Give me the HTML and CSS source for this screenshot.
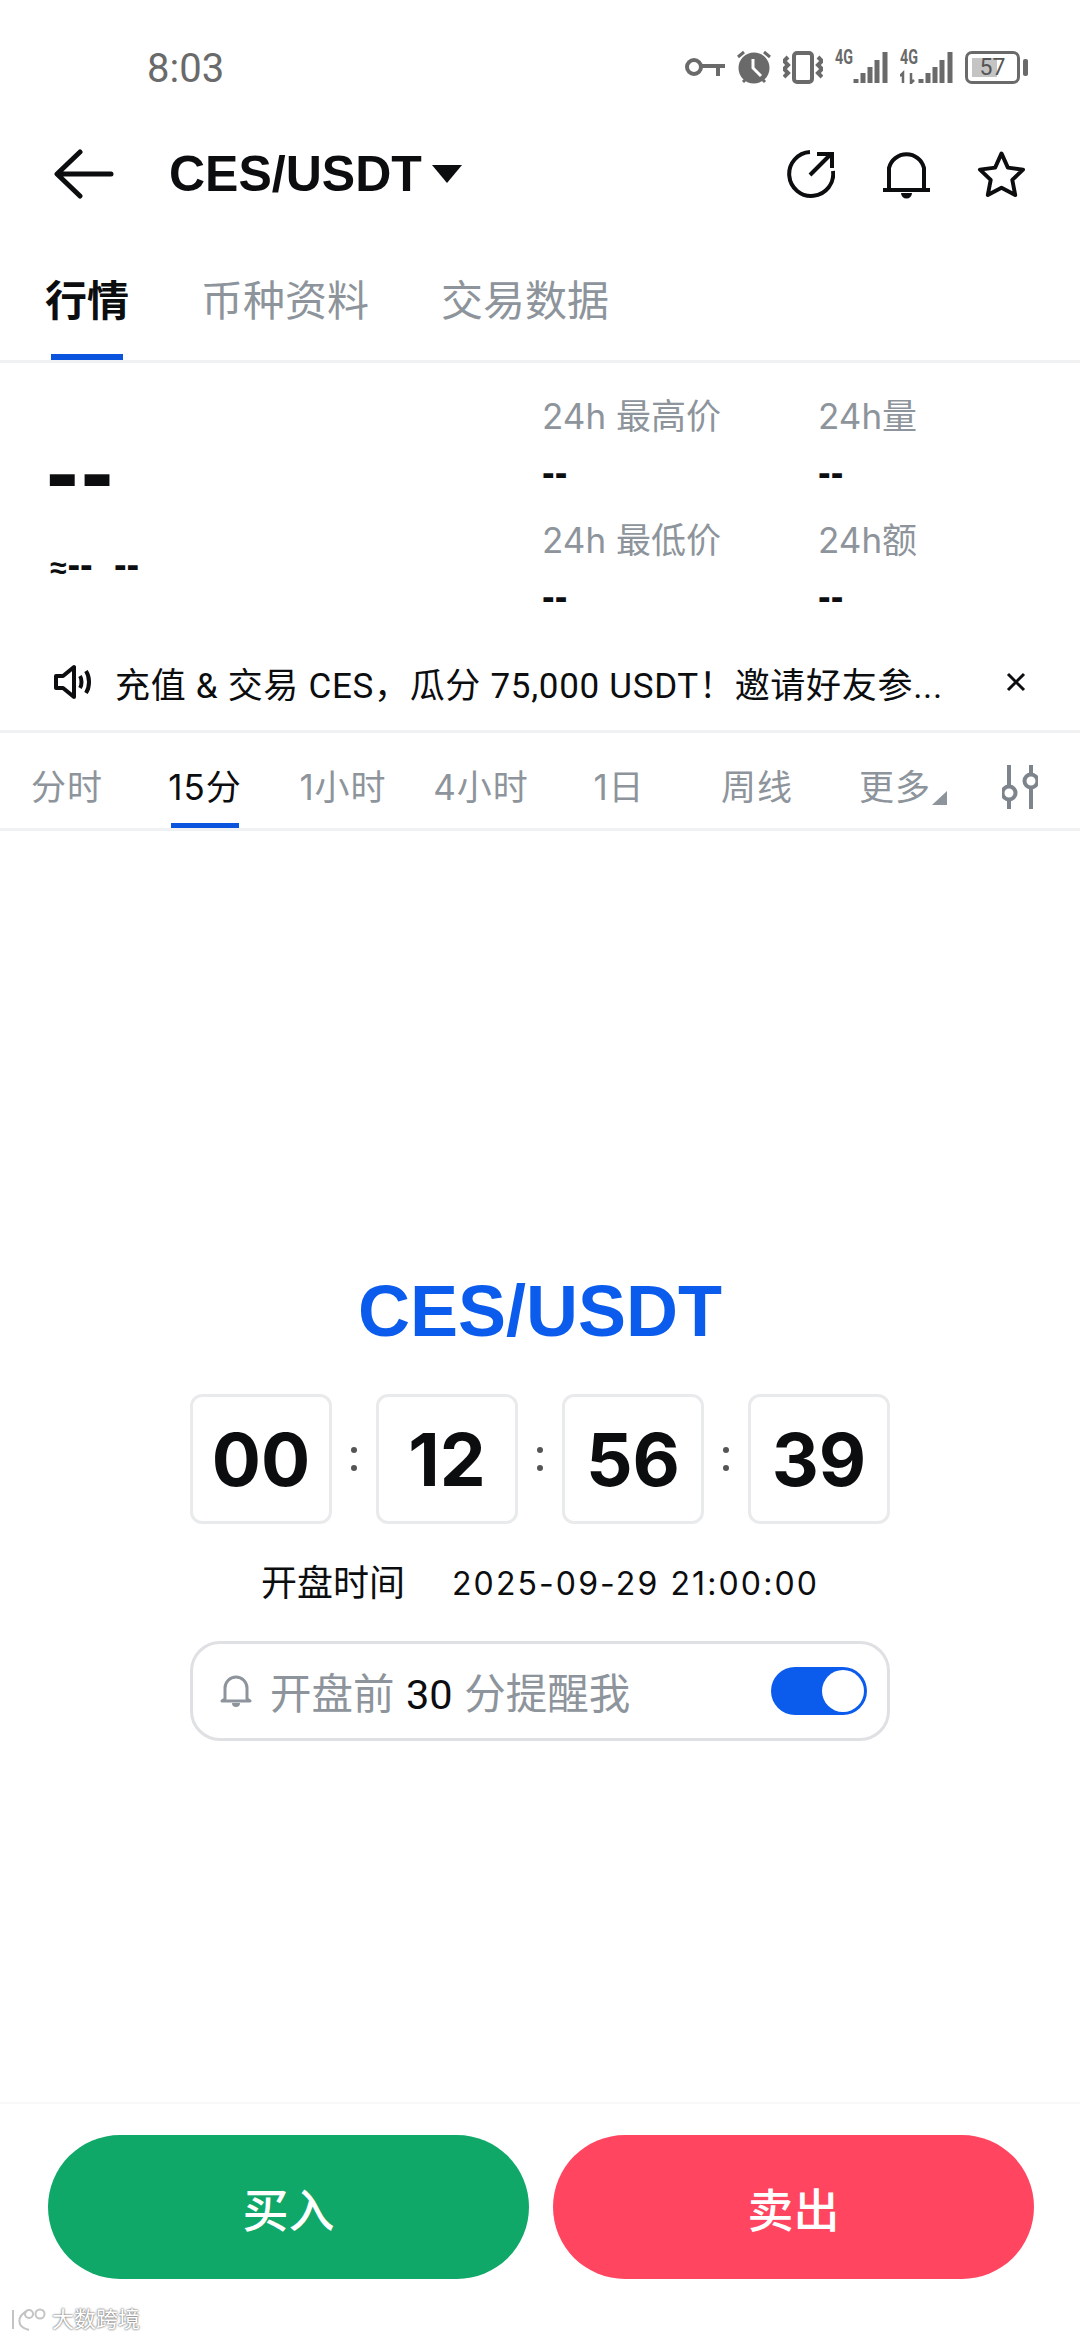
FILE: index.html
```html
<html>
    <head>
        <title>CES/USDT</title>
        <link rel="stylesheet" href="styles.css">
    </head>
    <body>
        <div class="page">
            <div class="status-bar">
                <span class="time">8:03</span>
                <div class="status-icons">
                    <svg class="ic-key" viewBox="0 0 40 18"><circle cx="9" cy="9" r="7" /><path d="M16 8H40M33 8V18" /></svg>
                    <svg class="ic-alarm" viewBox="0 0 34 34">
                        <circle class="solid" cx="17" cy="18" r="14" />
                        <path d="M1 7L7 2M33 7L27 2M6 32L9 29M28 32L25 29" />
                        <path class="cut" d="M16 9V18L24 26" />
                    </svg>
                    <svg class="ic-vibrate" viewBox="0 0 40 33">
                        <rect x="11" y="2" width="18" height="29" rx="3" />
                        <path d="M5 6L1 10L5 14L1 18L5 22L1 26M35 6L39 10L35 14L39 18L35 22L39 26" />
                    </svg>
                    <svg class="ic-signal" viewBox="0 -5 53 40">
                        <text class="net" x="0" y="15" textLength="18" lengthAdjust="spacingAndGlyphs">4G</text>
                        <path d="M21 30V34M28 24V34M35 18V34M42 11V34M50 3V34" />
                    </svg>
                    <svg class="ic-signal" viewBox="0 -5 53 40">
                        <text class="net" x="0" y="15" textLength="18" lengthAdjust="spacingAndGlyphs">4G</text>
                        <path class="thin" d="M3 34V24L0 27M11 24V34L14 31" />
                        <path d="M21 30V34M28 24V34M35 18V34M42 11V34M50 3V34" />
                    </svg>
                    <div class="battery">
                        <div class="battery-body">
                            <span class="battery-level"></span>
                            <span class="battery-text">57</span>
                        </div>
                        <span class="battery-nub"></span>
                    </div>
                </div>
            </div>

            <div class="header">
                <svg class="ic-back" viewBox="0 0 60 50"><path d="M57 25H4M26 3L3 25L26 47" /></svg>
                <span class="pair">CES/USDT</span>
                <span class="pair-caret"></span>
                <div class="header-actions">
                    <svg class="ic-share" viewBox="0 0 48 48"><path d="M23 2A22 22 0 1 0 46 21M23 25L44 4M30 4H45V18" /></svg>
                    <svg class="ic-bell" viewBox="0 0 48 50">
                        <path d="M6 41V19A18 18 0 0 1 41 19V41M0 41H47" />
                        <path class="fill" d="M18 44H29A5.500 5.500 0 0 1 18 44Z" />
                    </svg>
                    <svg class="ic-star" viewBox="0 0 50 48"><path d="M25 3L31.500 17.500L47 19.500L36 30L39 45.500L25 38L11 45.500L14 30L3 19.500L18.500 17.500Z" /></svg>
                </div>
            </div>

            <div class="tabs">
                <div class="tab active">行情<span class="tab-bar"></span></div>
                <div class="tab">币种资料</div>
                <div class="tab">交易数据</div>
            </div>

            <div class="stats">
                <div class="price-box">
                    <div class="price">--</div>
                    <div class="price-sub"><span class="approx">≈</span>--&nbsp;&nbsp;--</div>
                </div>
                <div class="stat-grid">
                    <div class="stat"><div class="stat-label">24h 最高价</div><div class="stat-value">--</div></div>
                    <div class="stat"><div class="stat-label">24h量</div><div class="stat-value">--</div></div>
                    <div class="stat"><div class="stat-label">24h 最低价</div><div class="stat-value">--</div></div>
                    <div class="stat"><div class="stat-label">24h额</div><div class="stat-value">--</div></div>
                </div>
            </div>

            <div class="notice">
                <svg class="ic-speaker" viewBox="0 0 40 36">
                    <path d="M2 12H9L20 3V33L9 24H2Z" />
                    <path d="M26 12C28 15 28 21 26 24M32 7C36 13 36 23 32 29" />
                </svg>
                <span class="notice-text">充值 &amp; 交易 CES，瓜分 75,000 USDT！邀请好友参...</span>
                <svg class="ic-close" viewBox="0 0 20 20"><path d="M2 2L18 18M18 2L2 18" /></svg>
            </div>

            <div class="frames">
                <div class="frame-list">
                    <div class="frame">分时</div>
                    <div class="frame active">15分<span class="frame-bar"></span></div>
                    <div class="frame">1小时</div>
                    <div class="frame">4小时</div>
                    <div class="frame">1日</div>
                    <div class="frame">周线</div>
                    <div class="frame">更多<span class="more-caret"></span></div>
                </div>
                <svg class="ic-sliders" viewBox="0 0 36 44">
                    <path d="M7 0V20M7 36V44M29 0V8M29 24V44" />
                    <circle cx="7" cy="28" r="6.500" />
                    <circle cx="29" cy="16" r="6.500" />
                </svg>
            </div>

            <div class="launch">
                <div class="launch-title">CES/USDT</div>
                <div class="countdown">
                    <div class="count-box">00</div>
                    <div class="count-sep"><i></i><i></i></div>
                    <div class="count-box">12</div>
                    <div class="count-sep"><i></i><i></i></div>
                    <div class="count-box">56</div>
                    <div class="count-sep"><i></i><i></i></div>
                    <div class="count-box">39</div>
                </div>
                <div class="open-time"><span>开盘时间</span><span class="open-date">2025-09-29 21:00:00</span></div>
                <div class="reminder">
                    <svg class="ic-bell-small" viewBox="0 0 32 34">
                        <path d="M5 25V14A11 11 0 0 1 27 14V25L30 27H2Z" />
                        <path class="fill" d="M12 29H20A4 4 0 0 1 12 29Z" />
                    </svg>
                    <span class="reminder-text">开盘前 <b>30</b> 分提醒我</span>
                    <div class="toggle"><span class="toggle-knob"></span></div>
                </div>
            </div>

            <div class="actions">
                <div class="btn buy">买入</div>
                <div class="btn sell">卖出</div>
            </div>

            <div class="watermark">
                <svg class="ic-mark" viewBox="0 0 38 24">
                    <path d="M3 2V21M17 3C7 8 6 19 19 22" />
                    <circle cx="19" cy="6" r="4" />
                    <circle cx="30" cy="6" r="4.500" />
                </svg>
                <span>大数跨境</span>
            </div>
        </div>
    </body>
</html>
```

FILE: styles.css
```css
* {
    box-sizing: border-box;
}
body {
    margin: 0;
    background: #fff;
    color: #0c0d0f;
    font-family: "Liberation Sans", "Noto Sans CJK SC", sans-serif;
}
svg {
    display: block;
    flex: none;
    fill: none;
    stroke: currentColor;
}
.page {
    position: relative;
    width: 1080px;
    height: 2340px;
    display: flex;
    flex-direction: column;
    overflow: hidden;
}

/* status bar */
.status-bar {
    height: 108px;
    padding: 26px 52px 0 147px;
    display: flex;
    align-items: center;
    justify-content: space-between;
    color: #6a6a6a;
}
.time {
    margin-top: 2px;
    font-family: Roboto, sans-serif;
    font-size: 40px;
}
.status-icons {
    display: flex;
    align-items: center;
    gap: 12px;
}
.status-icons svg {
    stroke-width: 5;
}
.ic-key {
    width: 40px;
    height: 18px;
}
.ic-key, .ic-vibrate {
    stroke-width: 4 !important;
}
.ic-alarm {
    width: 34px;
    height: 34px;
    stroke-width: 3 !important;
}
.ic-alarm .solid {
    fill: currentColor;
}
.ic-alarm .cut {
    stroke: #fff;
}
.ic-vibrate {
    width: 40px;
    height: 33px;
}
.ic-signal {
    width: 53px;
    height: 40px;
    margin-top: -7px;
}
.ic-signal .net {
    font-family: Roboto, sans-serif;
    font-size: 20px;
    font-weight: bold;
    fill: currentColor;
    stroke: none;
}
.ic-signal .thin {
    stroke-width: 2.500;
}
.battery {
    display: flex;
    align-items: center;
    gap: 3px;
}
.battery-body {
    position: relative;
    width: 55px;
    height: 33px;
    border: 3px solid #6a6a6a;
    border-radius: 7px;
    display: flex;
    align-items: center;
    justify-content: center;
    font-family: Roboto, sans-serif;
    font-size: 23px;
    color: #555;
}
.battery-level {
    position: absolute;
    left: 4px;
    top: 4px;
    bottom: 4px;
    width: 25px;
    background: #c4c4c4;
}
.battery-text {
    position: relative;
}
.battery-nub {
    width: 5px;
    height: 17px;
    background: #6a6a6a;
    border-radius: 2px;
}

/* header */
.header {
    height: 132px;
    padding: 0 54px;
    display: flex;
    align-items: center;
}
.ic-back {
    width: 60px;
    height: 50px;
    stroke-width: 5;
    stroke-linecap: round;
    stroke-linejoin: round;
}
.pair {
    margin-left: 55px;
    font-size: 50px;
    font-weight: bold;
}
.pair-caret {
    margin-left: 10px;
    border-left: 15px solid transparent;
    border-right: 15px solid transparent;
    border-top: 18px solid #0c0d0f;
}
.header-actions {
    margin-left: auto;
    display: flex;
    align-items: center;
    gap: 46px;
}
.ic-share {
    width: 48px;
    height: 48px;
    margin-right: 2px;
    stroke-width: 4;
}
.ic-bell {
    width: 48px;
    height: 50px;
    stroke-width: 4;
}
.ic-bell .fill, .ic-bell-small .fill {
    fill: currentColor;
    stroke: none;
}
.ic-star {
    width: 49px;
    height: 48px;
    stroke-width: 4;
    stroke-linejoin: round;
}

/* main tabs */
.tabs {
    height: 123px;
    padding: 0 45px;
    display: flex;
    gap: 72px;
    border-bottom: 3px solid #f0f1f2;
}
.tab {
    position: relative;
    padding-top: 37px;
    font-size: 42px;
    line-height: 50px;
    color: #8d949b;
}
.tab.active {
    color: #0c0d0f;
    font-weight: bold;
}
.tab-bar {
    position: absolute;
    left: 6px;
    right: 6px;
    bottom: 0;
    height: 6px;
    background: #0b55de;
}

/* price and 24h stats */
.stats {
    height: 275px;
    padding: 28px 0 0 50px;
    display: flex;
}
.price-box {
    width: 492px;
}
.price {
    margin: 43px 0 0 -4px;
    height: 76px;
    font-size: 98px;
    line-height: 76px;
    font-weight: bold;
    letter-spacing: 2px;
}
.price-sub {
    margin-top: 35px;
    font-size: 38px;
    line-height: 40px;
    font-weight: bold;
}
.approx {
    font-size: 30px;
    margin-right: 1px;
}
.stat-grid {
    display: grid;
    grid-template-columns: 276px 200px;
    row-gap: 16px;
    align-content: start;
}
.stat-label {
    font-family: Inter, "Noto Sans CJK SC", sans-serif;
    font-size: 35px;
    line-height: 50px;
    color: #8d949b;
}
.stat-value {
    margin-top: 7px;
    height: 51px;
    font-size: 38px;
    line-height: 50px;
    font-weight: bold;
}

/* notice line */
.notice {
    height: 95px;
    padding: 0 54px 4px;
    display: flex;
    align-items: center;
    border-bottom: 3px solid #f0f1f2;
}
.ic-speaker {
    width: 40px;
    height: 36px;
    stroke-width: 4;
    stroke-linejoin: round;
}
.notice-text {
    margin-left: 21px;
    font-family: Roboto, "Noto Sans CJK SC", sans-serif;
    font-size: 35px;
    letter-spacing: 0.7px;
    white-space: nowrap;
}
.ic-close {
    width: 20px;
    height: 20px;
    margin-left: auto;
    stroke-width: 3;
}

/* timeframes */
.frames {
    height: 98px;
    padding-right: 42px;
    display: flex;
    align-items: center;
    justify-content: space-between;
    border-bottom: 3px solid #f0f1f2;
}
.frame-list {
    height: 100%;
    display: grid;
    grid-template-columns: repeat(7, 134px);
    column-gap: 4px;
}
.frame {
    position: relative;
    display: flex;
    align-items: center;
    justify-content: center;
    padding-top: 8px;
    font-family: Inter, "Noto Sans CJK SC", sans-serif;
    font-size: 35px;
    letter-spacing: 1px;
    color: #8d949b;
}
.frame.active {
    color: #0c0d0f;
}
.frame-bar {
    position: absolute;
    left: 33px;
    bottom: 0;
    width: 68px;
    height: 5px;
    background: #0b55de;
}
.more-caret {
    position: absolute;
    right: 15px;
    top: 58px;
    border-left: 15px solid transparent;
    border-bottom: 14px solid #8d949b;
}
.ic-sliders {
    width: 36px;
    height: 44px;
    margin-top: 12px;
    color: #7d848b;
    stroke-width: 4;
}

/* pre-launch block */
.launch {
    flex: 1;
    padding-top: 435px;
    display: flex;
    flex-direction: column;
    align-items: center;
}
.launch-title {
    font-size: 72px;
    line-height: 90px;
    font-weight: bold;
    color: #0b5ced;
}
.countdown {
    margin-top: 38px;
    display: flex;
    align-items: center;
}
.count-box {
    width: 142px;
    height: 130px;
    display: flex;
    align-items: center;
    justify-content: center;
    border: 3px solid #e9eaec;
    border-radius: 12px;
    font-family: Inter, sans-serif;
    font-size: 73px;
    font-weight: bold;
}
.count-sep {
    width: 44px;
    display: flex;
    flex-direction: column;
    align-items: center;
    gap: 12px;
}
.count-sep i {
    width: 6px;
    height: 6px;
    border-radius: 50%;
    background: #555;
}
.open-time {
    margin-top: 35px;
    display: flex;
    gap: 47px;
    font-size: 36px;
    line-height: 50px;
}
.open-date {
    font-family: Inter, sans-serif;
    font-size: 32px;
    letter-spacing: 2.100px;
}
.reminder {
    margin-top: 32px;
    width: 700px;
    height: 100px;
    padding: 0 20px 0 27px;
    display: flex;
    align-items: center;
    border: 3px solid #dfe0e3;
    border-radius: 30px;
}
.ic-bell-small {
    width: 32px;
    height: 34px;
    color: #8d949b;
    stroke-width: 3;
    stroke-linejoin: round;
}
.reminder-text {
    margin-left: 18px;
    font-size: 41.500px;
    color: #8d949b;
}
.reminder-text b {
    font-family: Roboto, sans-serif;
    font-weight: normal;
    color: #0c0d0f;
}
.toggle {
    margin-left: auto;
    width: 96px;
    height: 48px;
    padding: 3px;
    display: flex;
    justify-content: flex-end;
    background: #0b5ced;
    border-radius: 24px;
}
.toggle-knob {
    width: 42px;
    height: 42px;
    border-radius: 50%;
    background: #fff;
}

/* bottom buttons */
.actions {
    height: 238px;
    padding: 31px 46px 0 48px;
    display: flex;
    gap: 24px;
    border-top: 2px solid #f8f8f9;
}
.btn {
    flex: 1;
    height: 144px;
    display: flex;
    align-items: center;
    justify-content: center;
    border-radius: 72px;
    font-size: 46px;
    font-weight: 500;
    color: #fff;
}
.buy {
    background: #0fa868;
}
.sell {
    background: #ff4560;
}

/* watermark over the bottom corner */
.watermark {
    position: absolute;
    left: 10px;
    bottom: 6px;
    display: flex;
    align-items: center;
    gap: 4px;
    color: #fff;
    font-size: 22px;
    line-height: 28px;
    text-shadow: 0 0 2px #777, 0 0 2px #777;
}
.ic-mark {
    width: 38px;
    height: 24px;
    color: #c4c4c4;
    stroke-width: 2;
}
```
